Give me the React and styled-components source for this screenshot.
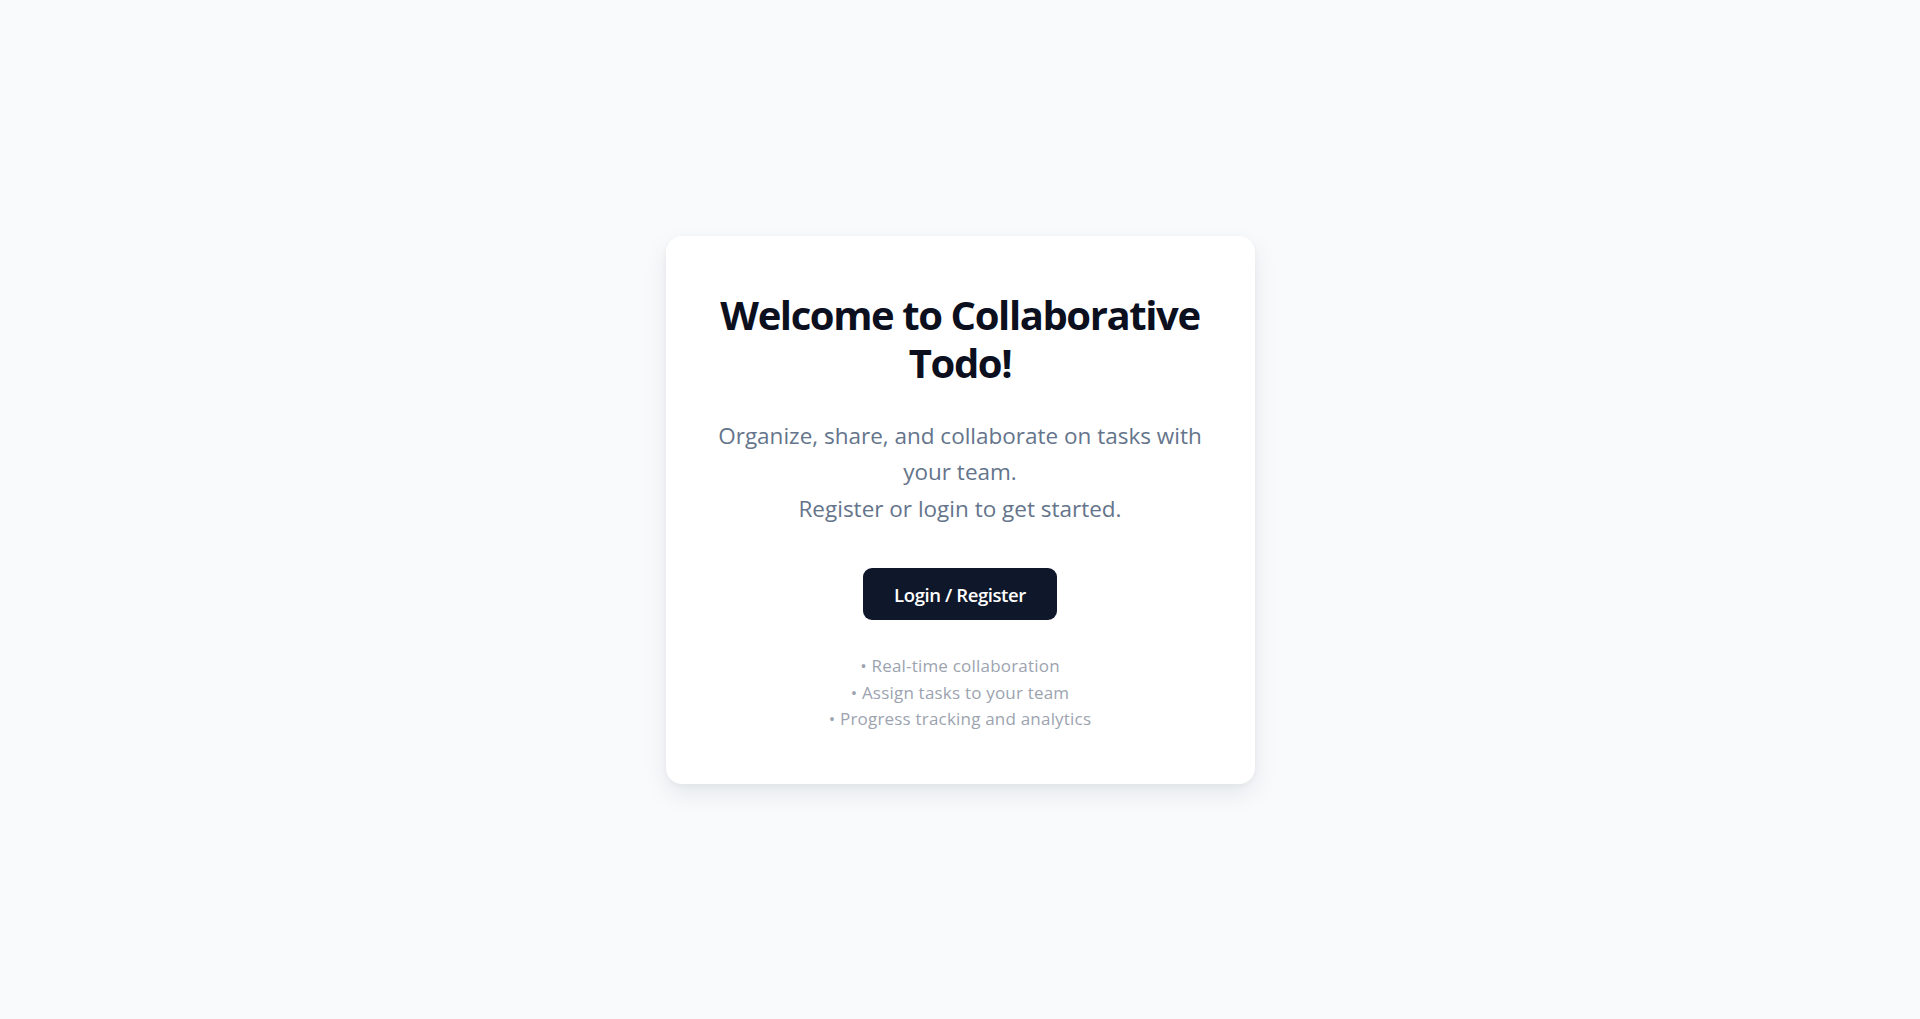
import React from "react";
import styled, { createGlobalStyle } from "styled-components";

const Global = createGlobalStyle`
  html, body { margin: 0; padding: 0; }
  body {
    background: #f8fafc;
    font-family: "Open Sans", "Noto Sans", "Liberation Sans", sans-serif;
  }
  * { box-sizing: border-box; }
`;

const Page = styled.main`
  min-height: 100vh;
  display: flex;
  align-items: center;
  justify-content: center;
  background: #f8fafc;
`;

const Card = styled.section`
  width: 589px;
  background: #ffffff;
  border-radius: 16px;
  box-shadow: 0 10px 24px rgba(15, 23, 42, 0.08), 0 2px 6px rgba(15, 23, 42, 0.04);
  padding: 55px 40px 51px;
  display: flex;
  flex-direction: column;
  align-items: center;
  text-align: center;
`;

const Title = styled.h1`
  margin: 0;
  font-size: 40px;
  line-height: 48px;
  font-weight: 700;
  color: #0b0f1e;
  letter-spacing: -1.4px;
`;

const Lead = styled.p`
  margin: 31px 0 0;
  font-size: 22.5px;
  line-height: 36.5px;
  color: #64748b;
  font-weight: 400;
  letter-spacing: 0;
`;

const PrimaryButton = styled.button`
  margin-top: 41px;
  width: 194px;
  height: 52px;
  border: none;
  border-radius: 9px;
  background: #0f172a;
  color: #ffffff;
  font-family: inherit;
  font-size: 18.5px;
  font-weight: 600;
  letter-spacing: -0.4px;
  cursor: pointer;
`;

const Features = styled.ul`
  list-style: none;
  margin: 33px 0 0;
  padding: 0;
  color: #9ca3af;
  font-size: 17px;
  line-height: 26.5px;
  letter-spacing: 0.2px;
`;

const Feature = styled.li``;

const features = [
  "Real-time collaboration",
  "Assign tasks to your team",
  "Progress tracking and analytics",
];

export default function App() {
  return (
    <>
      <Global />
      <Page>
        <Card>
          <Title>
            Welcome to Collaborative
            <br />
            Todo!
          </Title>
          <Lead>
            Organize, share, and collaborate on tasks with your team.
            <br />
            Register or login to get started.
          </Lead>
          <PrimaryButton>Login / Register</PrimaryButton>
          <Features>
            {features.map((f) => (
              <Feature key={f}>• {f}</Feature>
            ))}
          </Features>
        </Card>
      </Page>
    </>
  );
}
